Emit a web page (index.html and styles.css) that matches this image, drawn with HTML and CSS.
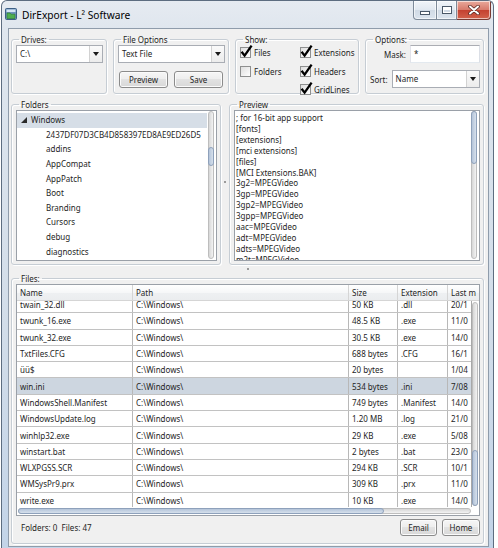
FILE: index.html
```html
<!DOCTYPE html>
<html lang="en">
<head>
<meta charset="utf-8">
<title>DirExport - L² Software</title>
<link rel="stylesheet" href="styles.css">
</head>
<body>
<div class="window">
  <div class="titlebar">
    <svg class="appicon" viewBox="0 0 12 12" width="12" height="12">
      <rect x="0.5" y="0.5" width="11" height="11" rx="1" fill="#6f95bd" stroke="#3d5f85"/>
      <rect x="1.5" y="1.5" width="9" height="2.5" fill="#d6e6f5"/>
      <path d="M2 10.5 L2 5 L5 5 L6 6.2 L10 6.2 L10 10.5 Z" fill="#4fae4f" stroke="#2e7a2e" stroke-width="0.6"/>
    </svg>
    <span class="title">DirExport - L² Software</span>
    <div class="caption">
      <div class="cbtn cmin"><span class="gmin"></span></div>
      <div class="cbtn cmax"><span class="gmax"></span></div>
      <div class="cbtn cclose">
        <svg viewBox="0 0 12 10" width="12" height="10">
          <path d="M2 1.5 L10 8.5 M10 1.5 L2 8.5" stroke="#5a2a24" stroke-width="3.6" stroke-linecap="round"/>
          <path d="M2 1.5 L10 8.5 M10 1.5 L2 8.5" stroke="#ffffff" stroke-width="2" stroke-linecap="round"/>
        </svg>
      </div>
    </div>
  </div>

  <div class="client">
    <div class="toprow">
      <fieldset class="grp g-drives">
        <legend>Drives:</legend>
        <div class="combo"><span class="val">C:\</span><span class="drop"><i class="arrow"></i></span></div>
      </fieldset>

      <fieldset class="grp g-fileopt">
        <legend>File Options</legend>
        <div class="combo"><span class="val">Text File</span><span class="drop"><i class="arrow"></i></span></div>
        <div class="btnrow">
          <div class="btn w49">Preview</div>
          <div class="btn w49">Save</div>
        </div>
      </fieldset>

      <fieldset class="grp g-show">
        <legend>Show:</legend>
        <div class="showgrid">
          <div class="chk"><span class="box"><svg viewBox="0 0 13 13"><path d="M1.6 6.8 L4.6 10.6 L11.6 0.6" fill="none" stroke="#000" stroke-width="2.3"/></svg></span>Files</div>
          <div class="chk"><span class="box"><svg viewBox="0 0 13 13"><path d="M1.6 6.8 L4.6 10.6 L11.6 0.6" fill="none" stroke="#000" stroke-width="2.3"/></svg></span>Extensions</div>
          <div class="chk"><span class="box"></span>Folders</div>
          <div class="chk"><span class="box"><svg viewBox="0 0 13 13"><path d="M1.6 6.8 L4.6 10.6 L11.6 0.6" fill="none" stroke="#000" stroke-width="2.3"/></svg></span>Headers</div>
          <div class="empty"></div>
          <div class="chk"><span class="box"><svg viewBox="0 0 13 13"><path d="M1.6 6.8 L4.6 10.6 L11.6 0.6" fill="none" stroke="#000" stroke-width="2.3"/></svg></span>GridLines</div>
        </div>
      </fieldset>

      <fieldset class="grp g-options">
        <legend>Options:</legend>
        <div class="optrow mask">
          <span class="lbl">Mask:</span>
          <div class="textbox">*</div>
        </div>
        <div class="optrow sort">
          <span class="lbl">Sort:</span>
          <div class="combo grow"><span class="val">Name</span><span class="drop"><i class="arrow"></i></span></div>
        </div>
      </fieldset>
    </div>

    <div class="midrow">
      <fieldset class="grp g-folders">
        <legend>Folders</legend>
        <div class="boxview">
          <div class="tree">
            <div class="trow sel"><i class="expander"></i><span>Windows</span></div>
            <div class="trow child">2437DF07D3CB4D858397ED8AE9ED26D5</div>
            <div class="trow child">addins</div>
            <div class="trow child">AppCompat</div>
            <div class="trow child">AppPatch</div>
            <div class="trow child">Boot</div>
            <div class="trow child">Branding</div>
            <div class="trow child">Cursors</div>
            <div class="trow child">debug</div>
            <div class="trow child">diagnostics</div>
          </div>
          <div class="vbar"><div class="vtrack"><div class="vthumb tree-thumb"></div></div></div>
        </div>
      </fieldset>

      <div class="vsplit"><span class="dot"></span></div>

      <fieldset class="grp g-preview">
        <legend>Preview</legend>
        <div class="boxview">
          <div class="ptext">; for 16-bit app support
[fonts]
[extensions]
[mci extensions]
[files]
[MCI Extensions.BAK]
3g2=MPEGVideo
3gp=MPEGVideo
3gp2=MPEGVideo
3gpp=MPEGVideo
aac=MPEGVideo
adt=MPEGVideo
adts=MPEGVideo
m2t=MPEGVideo</div>
          <div class="vbar"><div class="vtrack"><div class="vthumb prev-thumb"></div></div></div>
        </div>
      </fieldset>
    </div>

    <div class="hsplit"><span class="dot"></span></div>

    <fieldset class="grp g-files">
      <legend>Files:</legend>
      <div class="lv">
        <div class="lvhead">
          <div class="hc c1">Name</div>
          <div class="hc c2">Path</div>
          <div class="hc c3">Size</div>
          <div class="hc c4">Extension</div>
          <div class="hc c5">Last m</div>
        </div>
        <div class="lvbody">
          <div class="lvrows">
            <div class="rows-inner">
              <div class="lrow"><div class="c c1">twain_32.dll</div><div class="c c2">C:\Windows\</div><div class="c c3">50 KB</div><div class="c c4">.dll</div><div class="c c5">20/1</div></div>
              <div class="lrow"><div class="c c1">twunk_16.exe</div><div class="c c2">C:\Windows\</div><div class="c c3">48.5 KB</div><div class="c c4">.exe</div><div class="c c5">11/0</div></div>
              <div class="lrow"><div class="c c1">twunk_32.exe</div><div class="c c2">C:\Windows\</div><div class="c c3">30.5 KB</div><div class="c c4">.exe</div><div class="c c5">14/0</div></div>
              <div class="lrow"><div class="c c1">TxtFiles.CFG</div><div class="c c2">C:\Windows\</div><div class="c c3">688 bytes</div><div class="c c4">.CFG</div><div class="c c5">16/1</div></div>
              <div class="lrow"><div class="c c1">üü$</div><div class="c c2">C:\Windows\</div><div class="c c3">20 bytes</div><div class="c c4"></div><div class="c c5">1/04</div></div>
              <div class="lrow sel"><div class="c c1">win.ini</div><div class="c c2">C:\Windows\</div><div class="c c3">534 bytes</div><div class="c c4">.ini</div><div class="c c5">7/08</div></div>
              <div class="lrow"><div class="c c1">WindowsShell.Manifest</div><div class="c c2">C:\Windows\</div><div class="c c3">749 bytes</div><div class="c c4">.Manifest</div><div class="c c5">14/0</div></div>
              <div class="lrow"><div class="c c1">WindowsUpdate.log</div><div class="c c2">C:\Windows\</div><div class="c c3">1.20 MB</div><div class="c c4">.log</div><div class="c c5">21/0</div></div>
              <div class="lrow"><div class="c c1">winhlp32.exe</div><div class="c c2">C:\Windows\</div><div class="c c3">29 KB</div><div class="c c4">.exe</div><div class="c c5">5/08</div></div>
              <div class="lrow"><div class="c c1">winstart.bat</div><div class="c c2">C:\Windows\</div><div class="c c3">2 bytes</div><div class="c c4">.bat</div><div class="c c5">23/0</div></div>
              <div class="lrow"><div class="c c1">WLXPGSS.SCR</div><div class="c c2">C:\Windows\</div><div class="c c3">294 KB</div><div class="c c4">.SCR</div><div class="c c5">10/1</div></div>
              <div class="lrow"><div class="c c1">WMSysPr9.prx</div><div class="c c2">C:\Windows\</div><div class="c c3">309 KB</div><div class="c c4">.prx</div><div class="c c5">11/0</div></div>
              <div class="lrow"><div class="c c1">write.exe</div><div class="c c2">C:\Windows\</div><div class="c c3">10 KB</div><div class="c c4">.exe</div><div class="c c5">14/0</div></div>
            </div>
          </div>
          <div class="lvvbar"><div class="vtrack"><div class="vthumb files-thumb"></div></div></div>
        </div>
        <div class="lvhbar">
          <div class="htrack"><div class="hthumb"></div></div>
          <div class="corner"></div>
        </div>
      </div>
      <div class="statusrow">
        <span class="status">Folders: 0&nbsp; Files: 47</span>
        <div class="btn w37">Email</div>
        <div class="btn w38">Home</div>
      </div>
    </fieldset>
  </div>
</div>
</body>
</html>
```

FILE: styles.css
```css
* { box-sizing: border-box; }
html, body { margin: 0; padding: 0; background: #ffffff; }
body {
  font-family: "Noto Sans", "Open Sans", sans-serif;
  font-size: 8px;
  color: #1e1e1e;
  width: 498px;
  height: 548px;
  overflow: hidden;
}

/* ---------- window frame ---------- */
.window {
  margin-left: 1px;
  width: 493px;
  height: 548px;
  border: 1px solid #5d6d80;
  border-bottom: none;
  border-radius: 6px 6px 0 0;
  background: linear-gradient(#e6ebf1 0px, #dfe6ee 28px, #d2dde9 60%, #c3d4e8 100%);
  display: flex;
  flex-direction: column;
  overflow: hidden;
}
.titlebar {
  height: 27px;
  flex: none;
  display: flex;
  align-items: flex-start;
}
.appicon { margin: 7px 0 0 3px; flex: none; }
.title {
  margin: 7px 0 0 5px;
  font-size: 10.2px;
  line-height: 14px;
  color: #000;
  flex: 1;
}
.caption {
  display: flex;
  margin-right: 2px;
  flex: none;
}
.cbtn {
  height: 19px;
  border: 1px solid #7d8a99;
  border-top: none;
  display: flex;
  align-items: center;
  justify-content: center;
  box-shadow: inset 0 0 0 1px rgba(255,255,255,0.6);
}
.cmin {
  width: 24px;
  border-radius: 0 0 0 4px;
  background: linear-gradient(#f1f5f9, #e1e8f0 50%, #d0dae5 50%, #dbe4ee);
}
.cmax {
  width: 20px;
  border-left: none;
  background: linear-gradient(#f1f5f9, #e1e8f0 50%, #d0dae5 50%, #dbe4ee);
}
.cclose {
  width: 34px;
  border-left: none;
  border-color: #7a3b33;
  border-radius: 0 0 4px 0;
  background: linear-gradient(#e9a99c, #d7796a 50%, #c4402f 50%, #d2624c);
}
.gmin {
  width: 10px;
  height: 4px;
  margin-top: 6px;
  background: #fff;
  border: 1px solid #4a5868;
}
.gmax {
  width: 10px;
  height: 8px;
  background: transparent;
  border: 1px solid #4a5868;
  box-shadow: inset 0 0 0 1px #fff, inset 0 2px 0 1px #fff;
}

/* ---------- client area ---------- */
.client {
  flex: 1;
  margin: 0 4px 1px 6px;
  border: 1px solid #8f9cab;
  background: #f0f0f0;
  padding: 5px 4px 2px 2px;
  display: flex;
  flex-direction: column;
  min-height: 0;
}

fieldset.grp {
  margin: 0;
  padding: 0 3px 3px 4px;
  border: 1px solid #c6cdd4;
  border-radius: 3px;
  min-width: 0;
  box-shadow: inset 1px 1px 0 #ffffff, 1px 1px 0 #ffffff;
}
fieldset.grp legend {
  padding: 0 2px;
  margin-left: 3px;
  font-size: 8px;
  line-height: 11px;
  color: #1e1e1e;
}

/* top row */
.toprow {
  display: flex;
  gap: 6px;
  height: 60px;
  flex: none;
}
.toprow fieldset.grp { height: 60px; }
.g-drives { width: 96px; padding-top: 1px; }
.g-fileopt { width: 116px; padding-top: 1px; }
.g-show { width: 124px; }
.g-options { width: 119px; padding-right: 3px; }

.combo {
  height: 18px;
  border: 1px solid #a9adb4;
  background: #ffffff;
  display: flex;
  align-items: stretch;
}
.combo .val {
  flex: 1;
  padding-left: 3px;
  line-height: 16px;
  white-space: nowrap;
  overflow: hidden;
}
.combo .drop {
  width: 13px;
  border-left: 1px solid #d2d2d2;
  display: flex;
  align-items: center;
  justify-content: center;
  background: linear-gradient(#fafafa, #ececec);
}
.arrow {
  width: 0;
  height: 0;
  border-left: 3px solid transparent;
  border-right: 3px solid transparent;
  border-top: 4px solid #1a1a1a;
}
.grow { flex: 1; }

.btnrow {
  display: flex;
  gap: 6px;
  margin-top: 8px;
  padding-left: 1px;
}
.btn {
  height: 17px;
  border: 1px solid #8b8b8b;
  border-radius: 3px;
  background: linear-gradient(#f6f6f6, #ededed 50%, #e2e2e2 50%, #d8d8d8);
  box-shadow: inset 0 0 0 1px #fbfbfb;
  display: flex;
  align-items: center;
  justify-content: center;
  color: #1e1e1e;
  flex: none;
}
.w49 { width: 49px; }
.w37 { width: 37px; }
.w38 { width: 38px; }

.showgrid {
  display: grid;
  grid-template-columns: 60px auto;
  grid-auto-rows: 11px;
  row-gap: 7.5px;
  padding-top: 2px;
}
.chk {
  display: flex;
  align-items: center;
  gap: 3px;
  line-height: 11px;
  white-space: nowrap;
}
.box {
  width: 11px;
  height: 11px;
  border: 1px solid #8e8f8f;
  background: linear-gradient(135deg, #dedede, #ffffff);
  position: relative;
  flex: none;
}
.box svg {
  position: absolute;
  left: -1px;
  top: -3px;
  width: 13px;
  height: 13px;
  overflow: visible;
}

.optrow {
  display: flex;
  align-items: center;
}
.mask { justify-content: flex-end; }
.mask .lbl { margin-right: 4px; }
.sort { margin-top: 7px; }
.sort .lbl { margin-right: 4px; }
.textbox {
  width: 70px;
  height: 18px;
  border: 1px solid #abadb3;
  border-color: #abadb3 #dbdfe6 #e3e9ef #e2e3ea;
  background: #fff;
  padding-left: 3px;
  line-height: 16px;
}

/* middle row */
.midrow {
  display: flex;
  height: 166px;
  margin-top: 5px;
  flex: none;
}
.midrow fieldset.grp {
  height: 166px;
  display: flex;
  flex-direction: column;
}
.g-folders { width: 210px; padding: 5px 6px 4px 7px; }
.g-preview { flex: 1; padding: 5px 6px 4px 6px; }
.vsplit {
  width: 8px;
  display: flex;
  align-items: center;
  justify-content: center;
  flex: none;
}
.hsplit {
  height: 8px;
  flex: none;
  display: flex;
  align-items: center;
  padding-left: 236px;
}
.dot {
  width: 2px;
  height: 2px;
  background: #9a9a9a;
}

.boxview {
  flex: 1;
  min-height: 0;
  border: 1px solid #9aa0a8;
  background: #ffffff;
  display: flex;
}
.tree {
  flex: 1;
  overflow: hidden;
  min-width: 0;
  padding-top: 2px;
}
.trow {
  height: 14.65px;
  line-height: 14.65px;
  white-space: nowrap;
  overflow: hidden;
  display: flex;
  align-items: center;
}
.trow.sel { background: #d6dee7; }
.trow.child { padding-left: 29px; }
.expander {
  width: 0;
  height: 0;
  border-right: 6px solid #2a2a2a;
  border-top: 6px solid transparent;
  margin: 0 4px 0 4px;
}
.vbar {
  width: 9px;
  flex: none;
  padding: 0 2px 1px 1px;
  display: flex;
}
.vtrack {
  flex: 1;
  border: 1px solid #bdbdbd;
  border-radius: 3px;
  background: linear-gradient(90deg, #d6d6d6, #f3f3f3);
  display: flex;
  flex-direction: column;
}
.vthumb {
  border: 1px solid #8ea1bb;
  border-radius: 3px;
  background: linear-gradient(90deg, #b4c4d9, #d6e0ec);
  margin: -1px;
}
.tree-thumb { margin-top: 35px; height: 19px; }
.prev-thumb { height: 53px; }
.files-thumb { margin-top: auto; height: 56px; }

.ptext {
  flex: 1;
  white-space: pre;
  overflow: hidden;
  line-height: 10.9px;
  padding-left: 1px;
  padding-top: 2px;
  color: #1e1e1e;
}

/* files */
.g-files {
  flex: 1;
  min-height: 0;
  padding: 2px 6px 3px 7px;
  display: flex;
  flex-direction: column;
}
.lv {
  height: 232px;
  border: 1px solid #9aa0a8;
  background: #ffffff;
  display: flex;
  flex-direction: column;
  flex: none;
}
.lvhead {
  height: 16px;
  flex: none;
  display: flex;
  overflow: hidden;
  border-bottom: 1px solid #d5d5d5;
  background: linear-gradient(#ffffff, #f6f7f8 50%, #eef0f2 50%, #ebedef);
}
.hc {
  flex: none;
  border-right: 1px solid #d5d5d5;
  padding-left: 3px;
  line-height: 16px;
  white-space: nowrap;
  overflow: hidden;
  color: #1e1e1e;
}
.c1 { width: 116px; }
.c2 { width: 216px; }
.c3 { width: 49px; }
.c4 { width: 50px; }
.c5 { width: 100px; }

.lvbody {
  flex: 1;
  display: flex;
  min-height: 0;
}
.lvrows {
  flex: 1;
  overflow: hidden;
  min-width: 0;
}
.rows-inner { margin-top: -4px; }
.lrow {
  display: flex;
  height: 16.3px;
  border-bottom: 1px solid #c2c2c2;
}
.lrow.sel { background: #cdd6e0; }
.c {
  flex: none;
  border-right: 1px solid #b8b8b8;
  padding-left: 3px;
  white-space: nowrap;
  overflow: hidden;
  display: flex;
  align-items: center;
}
.lvvbar {
  width: 8px;
  flex: none;
  padding: 1px 1px 1px 0;
  display: flex;
  border-left: 1px solid #a8a8a8;
}
.lvhbar {
  height: 8px;
  flex: none;
  display: flex;
}
.htrack {
  flex: 1;
  margin: 1px 0 1px 1px;
  border: 1px solid #bdbdbd;
  border-radius: 3px;
  background: linear-gradient(#d6d6d6, #f3f3f3);
  display: flex;
}
.hthumb {
  width: 366px;
  margin: -1px;
  border: 1px solid #8ea1bb;
  border-radius: 3px;
  background: linear-gradient(#b4c4d9, #d6e0ec);
}
.corner { width: 8px; }

.statusrow {
  display: flex;
  align-items: center;
  gap: 5px;
  margin-top: 3px;
  height: 17px;
}
.statusrow .btn { height: 17px; }
.status {
  flex: 1;
  padding-left: 5px;
}
```
